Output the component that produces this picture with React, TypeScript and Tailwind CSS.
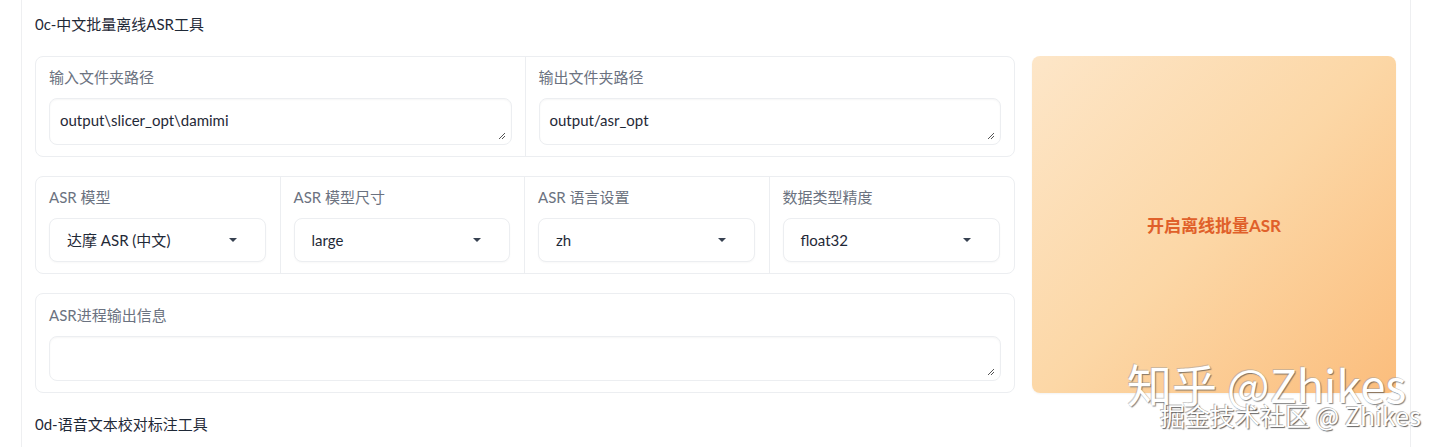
import React from "react";

const font = "font-['Lato','Noto_Sans_CJK_SC',sans-serif]";

function Caret() {
  return (
    <svg width="10" height="6" viewBox="0 0 10 6" className="shrink-0">
      <path d="M1 1 L9 1 L5 5 Z" fill="#374151" />
    </svg>
  );
}

function Resize() {
  return (
    <svg width="9" height="9" viewBox="0 0 9 9" className="absolute right-[5px] bottom-[4px]">
      <path d="M8 2 L2 8 M8 5 L5 8" stroke="#555" strokeWidth="1" />
    </svg>
  );
}

function TextBox({ value, h }: { value?: string; h: string }) {
  return (
    <div className={`relative ${h} rounded-[8px] border border-[#eceef1] bg-white shadow-[inset_0_1px_2px_rgba(0,0,0,0.04)] px-[10px] flex items-center text-[15px] text-[#1f2937]`}>
      <span className="-mt-[2px]">{value}</span>
      <Resize />
    </div>
  );
}

function Label({ children }: { children: React.ReactNode }) {
  return <div className="text-[15px] leading-[20px] text-[#6b7280] mb-[11px]">{children}</div>;
}

function Select({ value }: { value: string }) {
  return (
    <div className="h-[44px] rounded-[8px] border border-[#eceef1] bg-white shadow-[0_1px_2px_rgba(0,0,0,0.03)] pl-[17px] pr-[27px] flex items-center justify-between text-[15px] text-[#1f2937]">
      <span>{value}</span>
      <Caret />
    </div>
  );
}

export default function App() {
  return (
    <div className={`relative w-full h-[447px] overflow-hidden bg-white ${font}`}>
      <div className="ml-[21px] w-[1390px] h-full border-x border-[#eeeff1] px-[13px]">
        <div className="pt-[14px] h-[56px] text-[15px] leading-[20px] text-[#1f2937]">0c-中文批量离线ASR工具</div>
        <div className="flex gap-[17px]">
          <div className="w-[980px] flex flex-col gap-[19px]">
            <div className="h-[101px] rounded-[8px] border border-[#eceef1] flex">
              <div className="flex-1 border-r border-[#eceef1] pt-[10px] pl-[13px] pr-[13px]">
                <Label>输入文件夹路径</Label>
                <TextBox value="output\slicer_opt\damimi" h="h-[47px]" />
              </div>
              <div className="flex-1 pt-[10px] pl-[13px] pr-[13px]">
                <Label>输出文件夹路径</Label>
                <TextBox value="output/asr_opt" h="h-[47px]" />
              </div>
            </div>
            <div className="h-[98px] rounded-[8px] border border-[#eceef1] grid grid-cols-4">
              {[
                ["ASR 模型", "达摩 ASR (中文)"],
                ["ASR 模型尺寸", "large"],
                ["ASR 语言设置", "zh"],
                ["数据类型精度", "float32"],
              ].map(([l, v], i) => (
                <div key={i} className={`pt-[10px] pl-[13px] pr-[14px] ${i < 3 ? "border-r border-[#eceef1]" : ""}`}>
                  <Label>{l}</Label>
                  <Select value={v} />
                </div>
              ))}
            </div>
            <div className="h-[100px] rounded-[8px] border border-[#eceef1] pt-[11px] px-[13px]">
              <Label>ASR进程输出信息</Label>
              <TextBox h="h-[45px]" />
            </div>
          </div>
          <div className="w-[364px] h-[337px] rounded-[8px] bg-[linear-gradient(135deg,#fde6c8_0%,#fcd7a6_50%,#fbbd7c_100%)] flex items-center justify-center shadow-[0_1px_2px_rgba(0,0,0,0.05)]">
            <span className="text-[17px] font-bold text-[#e0602a] mt-[3px]">开启离线批量ASR</span>
          </div>
        </div>
        <div className="pt-[21px] text-[15px] leading-[20px] text-[#1f2937]">0d-语音文本校对标注工具</div>
      </div>
      <div className="absolute left-[1127px] top-[356px] text-[45px] leading-[56px] text-white font-['Noto_Sans_CJK_SC',sans-serif] [text-shadow:1px_1px_1px_rgba(80,80,80,0.7),-1px_-1px_0_rgba(160,160,160,0.5)]">
        知乎 @Zhikes
      </div>
      <div className="absolute left-[1160px] top-[398px] text-[25px] leading-[34px] text-white font-['Noto_Sans_CJK_SC',sans-serif] [text-shadow:1px_1px_1px_rgba(60,60,60,0.8),-1px_-1px_0_rgba(120,120,120,0.5)]">
        掘金技术社区 @ Zhikes
      </div>
    </div>
  );
}
